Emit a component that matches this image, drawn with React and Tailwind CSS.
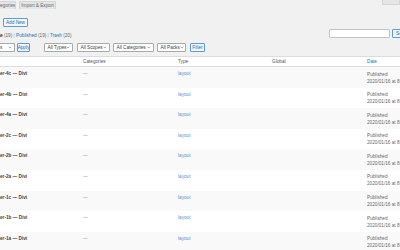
const layouts = ["er-4c", "er-4b", "er-4a", "er-2c", "er-2b", "er-2a", "er-1c", "er-1b", "er-1a"];

function Chevron() {
  return (
    <svg width="4" height="3" viewBox="0 0 4 3" className="shrink-0">
      <path d="M0.6 0.7 L2 2.1 L3.4 0.7" fill="none" stroke="#6c7781" strokeWidth="0.6" />
    </svg>
  );
}

function Select({ label, className }) {
  return (
    <div className={`h-[9px] flex items-center justify-between pl-[2.5px] pr-[2px] bg-white border border-[#a7aaad] rounded-[1px] whitespace-nowrap text-[#3c434a] ${className}`}>
      <span className="leading-[7px]">{label}</span>
      <Chevron />
    </div>
  );
}

function Button({ label, className }) {
  return (
    <div className={`h-[9px] flex items-center justify-center bg-[#f3f5f6] border border-[#5b9dd9] rounded-[1px] text-[#2271b1] whitespace-nowrap ${className}`}>
      {label}
    </div>
  );
}

export default function App() {
  return (
    <div className="w-[400px] h-[250px] overflow-hidden bg-[#f1f1f1] font-['Liberation_Sans',Arial,sans-serif] text-[4.7px] text-[#3c434a]">
      {/* nav tabs + screen options */}
      <div className="flex justify-between h-[9px]">
        <div className="flex items-end gap-[3px]">
          <div className="w-[16px] h-[8px] leading-[8px] bg-[#e5e5e5] border-r border-t border-[#d5d5d5] text-[#646970] whitespace-nowrap overflow-hidden">
            egories
          </div>
          <div className="w-[37px] h-[8px] leading-[8px] bg-[#e5e5e5] border border-b-0 border-[#d5d5d5] text-[#646970] text-center whitespace-nowrap">
            Import &amp; Export
          </div>
        </div>
        <div className="w-[18px] h-[5px] bg-[#e5e5e5] border border-t-0 border-[#d5d5d5] rounded-b-[1px]" />
      </div>

      {/* heading action */}
      <div className="mt-[9px] ml-[3px] w-[25px]">
        <Button label="Add New" className="w-[25px]" />
      </div>

      {/* status links + search */}
      <div className="mt-[2px] flex justify-between h-[9px]">
        <div className="mt-[4px] leading-[6px] whitespace-nowrap">
          <span className="font-bold text-[#1d2327]">e</span>
          <span className="text-[#646970]"> (19)</span>
          <span className="text-[#a7aaad]"> | </span>
          <span className="text-[#2271b1]">Published</span>
          <span className="text-[#646970]"> (19)</span>
          <span className="text-[#a7aaad]"> | </span>
          <span className="text-[#2271b1]">Trash</span>
          <span className="text-[#646970]"> (20)</span>
        </div>
        <div className="w-[71px] flex gap-[2px] overflow-hidden">
          <div className="w-[61px] h-[9px] shrink-0 bg-white border border-[#c3c4c7] rounded-[1px]" />
          <Button label="Search Layouts" className="shrink-0 px-[3px]" />
        </div>
      </div>

      {/* filters */}
      <div className="mt-[5px] flex h-[9px]">
        <div className="w-[15px] h-[9px] flex items-center justify-between pr-[2px] bg-white border border-l-0 border-[#a7aaad] rounded-r-[1px]">
          <span className="leading-[7px]">s</span>
          <Chevron />
        </div>
        <Button label="Apply" className="ml-[2px] w-[13px]" />
        <Select label="All Types" className="ml-[14px] w-[29px]" />
        <Select label="All Scopes" className="ml-[4px] w-[33px]" />
        <Select label="All Categories" className="ml-[3px] w-[41px]" />
        <Select label="All Packs" className="ml-[3px] w-[29px]" />
        <Button label="Filter" className="ml-[4px] w-[15px]" />
      </div>

      {/* table */}
      <div className="mt-[4px] bg-white">
        <div className="grid grid-cols-[83px_95px_94px_95px_1fr] h-[11px] leading-[9px] border-t border-b border-[#dcdcde] whitespace-nowrap text-[#50575e]">
          <div />
          <div>Categories</div>
          <div>Type</div>
          <div>Global</div>
          <div className="text-[#2271b1]">Date</div>
        </div>
        {layouts.map((name, i) => (
          <div
            key={name}
            className={`grid grid-cols-[83px_95px_94px_95px_1fr] h-[20.6px] whitespace-nowrap ${i % 2 === 0 ? "bg-[#f9f9f9]" : "bg-white"}`}
          >
            <div className="pt-[4px] leading-[6px] font-bold text-[#3c434a]">
              {name} — Divi
            </div>
            <div className="pt-[4px] leading-[6px] text-[#8c8f94]">—</div>
            <div className="pt-[4px] leading-[6px] text-[#4f94d4]">layout</div>
            <div />
            <div className="pt-[3.5px] leading-[7px] text-[#646970] overflow-hidden">
              <div>Published</div>
              <div>2020/01/16 at 8:37 am</div>
            </div>
          </div>
        ))}
      </div>
    </div>
  );
}
